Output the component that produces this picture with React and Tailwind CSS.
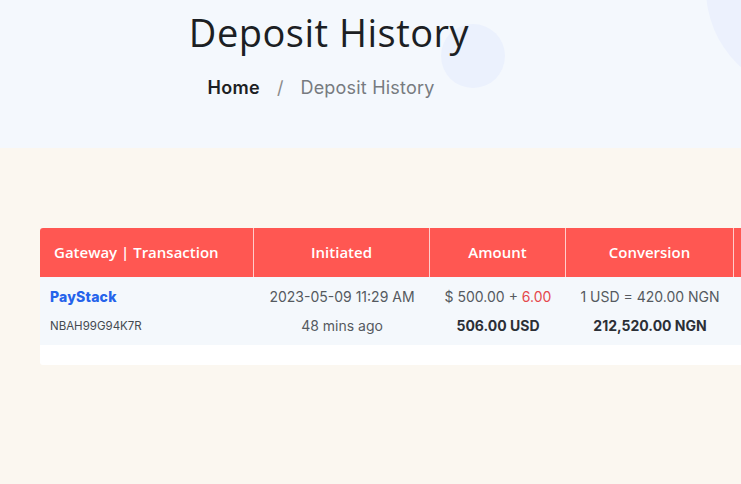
import React from 'react';

const heads = ['Gateway | Transaction', 'Initiated', 'Amount', 'Conversion', ''];
const widths = ['w-[214px]', 'w-[176px]', 'w-[136px]', 'w-[168px]', 'w-[206px]'];

const App = () => {
  return (
    <div className="w-[741px] h-[484px] overflow-hidden bg-[#fbf7f0] font-['Inter',sans-serif]">
      {/* hero */}
      <section className="relative h-[148px] bg-[#f4f8fd] overflow-hidden">
        <div className="absolute left-[706px] top-[-116px] w-[210px] h-[210px] rounded-full bg-[#ecf1fd]" />
        <div className="absolute left-[441px] top-[24px] w-[64px] h-[64px] rounded-full bg-[#ebf1fd]" />
        <div className="relative w-[658px] flex flex-col items-center pt-[8px]">
          <h1 className="font-['Open_Sans',sans-serif] text-[38px] leading-[48px] text-[#1c1f24] tracking-[0.5px]">
            Deposit History
          </h1>
          <nav className="mt-[20px] mr-[16px] flex items-center text-[18px] leading-[24px]">
            <span className="font-semibold text-[#1c1f24] tracking-[0.3px]">Home</span>
            <span className="mx-[17px] text-[#8a8a8a]">/</span>
            <span className="text-[#777b80] tracking-[0.2px]">Deposit History</span>
          </nav>
        </div>
      </section>

      {/* table */}
      <div className="pt-[80px] pl-[40px]">
        <div className="w-[900px] bg-white rounded-[3px] pb-[20px]">
          <div className="flex h-[49px] bg-[#ff5752] text-white text-[15px] font-semibold font-['Open_Sans',sans-serif] rounded-t-[3px]">
            {heads.map((h, i) => (
              <div
                key={i}
                className={`flex items-center border-r border-white/70 ${widths[i]} ${
                  i === 0 ? 'justify-start pl-[14px]' : 'justify-center'
                }`}
              >
                {h}
              </div>
            ))}
          </div>
          <div className="flex h-[68px] bg-[#f4f8fc] text-[14px] text-[#555a60]">
            <div className="w-[214px] pl-[10px] flex flex-col justify-center gap-[9px]">
              <span className="font-extrabold text-[#2563eb] leading-[20px] tracking-[0.2px]">PayStack</span>
              <span className="text-[11.5px] text-[#454a50] leading-[20px]">NBAH99G94K7R</span>
            </div>
            <div className="w-[176px] flex flex-col items-center justify-center gap-[9px] leading-[20px]">
              <span>2023-05-09 11:29 AM</span>
              <span>48 mins ago</span>
            </div>
            <div className="w-[136px] flex flex-col items-center justify-center gap-[9px] leading-[20px]">
              <span>
                $ 500.00 + <span className="text-[#e5484d]">6.00</span>
              </span>
              <span className="font-bold text-[#2b2f36]">506.00 USD</span>
            </div>
            <div className="w-[168px] flex flex-col items-center justify-center gap-[9px] leading-[20px]">
              <span>1 USD = 420.00 NGN</span>
              <span className="font-bold text-[#2b2f36]">212,520.00 NGN</span>
            </div>
            <div className="w-[206px]" />
          </div>
        </div>
      </div>
    </div>
  );
};

export default App;
